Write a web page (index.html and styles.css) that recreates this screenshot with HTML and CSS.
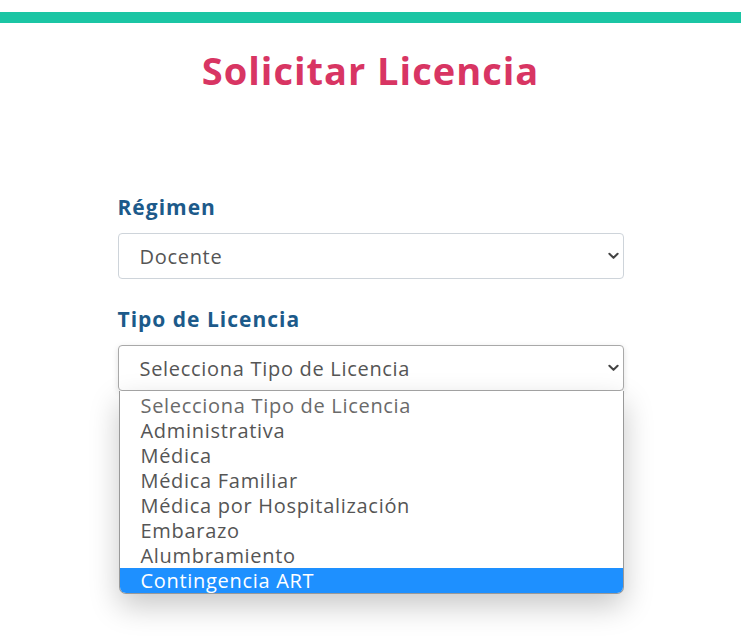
FILE: index.html
```html
<!DOCTYPE html>
<html lang="es">
<head>
    <meta charset="UTF-8">
    <meta name="viewport" content="width=device-width, initial-scale=1.0">
    <title>Solicitar Licencia</title>
    <link rel="stylesheet" href="styles.css">
</head>
<body>
    <div class="top-bar"></div>
    <h1 class="title">Solicitar Licencia</h1>

    <form class="license-form">
        <div class="field">
            <label class="field-label">Régimen</label>
            <div class="select">
                <span>Docente</span>
                <svg class="chevron" width="12" height="8" viewBox="0 0 12 8"><path d="M1.5 1.5 L6 6 L10.5 1.5" fill="none" stroke="#444" stroke-width="2.2" stroke-linecap="round" stroke-linejoin="round"/></svg>
            </div>
        </div>

        <div class="field">
            <label class="field-label">Tipo de Licencia</label>
            <div class="select open">
                <span>Selecciona Tipo de Licencia</span>
                <svg class="chevron" width="12" height="8" viewBox="0 0 12 8"><path d="M1.5 1.5 L6 6 L10.5 1.5" fill="none" stroke="#444" stroke-width="2.2" stroke-linecap="round" stroke-linejoin="round"/></svg>
            </div>
            <ul class="options">
                <li class="muted">Selecciona Tipo de Licencia</li>
                <li>Administrativa</li>
                <li>Médica</li>
                <li>Médica Familiar</li>
                <li>Médica por Hospitalización</li>
                <li>Embarazo</li>
                <li>Alumbramiento</li>
                <li class="active">Contingencia ART</li>
            </ul>
        </div>
    </form>
</body>
</html>
```

FILE: styles.css
```css
:root {
    --teal: #1bc5a4;
    --pink: #d83563;
    --blue: #1c5a8a;
    --text: #555;
    --border: #ced4da;
}

body {
    margin: 0;
    padding-bottom: 40px;
    font-family: 'Open Sans', sans-serif;
    color: var(--text);
    background: #fff;
}

.top-bar {
    height: 11px;
    margin-top: 12px;
    background-color: var(--teal);
}

.title {
    margin: 24px 0 0;
    text-align: center;
    font-size: 38px;
    line-height: 46px;
    font-weight: 700;
    letter-spacing: 1px;
    color: var(--pink);
}

.license-form {
    width: 506px;
    margin: 101px auto 0;
}

.field {
    margin-bottom: 27px;
}

.field-label {
    display: block;
    margin-bottom: 13px;
    font-size: 21px;
    line-height: 26px;
    font-weight: 700;
    letter-spacing: 1px;
    color: var(--blue);
}

.select {
    box-sizing: border-box;
    height: 46px;
    padding: 0 4px 0 21px;
    display: flex;
    align-items: center;
    justify-content: space-between;
    border: 1px solid var(--border);
    border-radius: 4px;
    font-size: 20px;
    letter-spacing: 0.7px;
    color: var(--text);
}

.chevron {
    width: 11px;
    height: 8px;
}

.select.open {
    border-color: #a9a9a9;
    box-shadow: 0 2px 6px rgba(0, 0, 0, 0.12);
}

.options {
    margin: 0 0 0 1px;
    padding: 2px 0 0;
    list-style: none;
    background: #fff;
    border: 1px solid #999;
    border-top: 0;
    border-radius: 0 0 7px 7px;
    overflow: hidden;
    box-shadow: 0 12px 30px rgba(0, 0, 0, 0.22);
}

.options li {
    height: 25px;
    line-height: 25px;
    padding-left: 21px;
    font-size: 20px;
    letter-spacing: 0.7px;
    color: var(--text);
}

.options li.muted {
    color: #6a6a6a;
}

.options li.active {
    background-color: #1e90ff;
    color: #fff;
}
```
